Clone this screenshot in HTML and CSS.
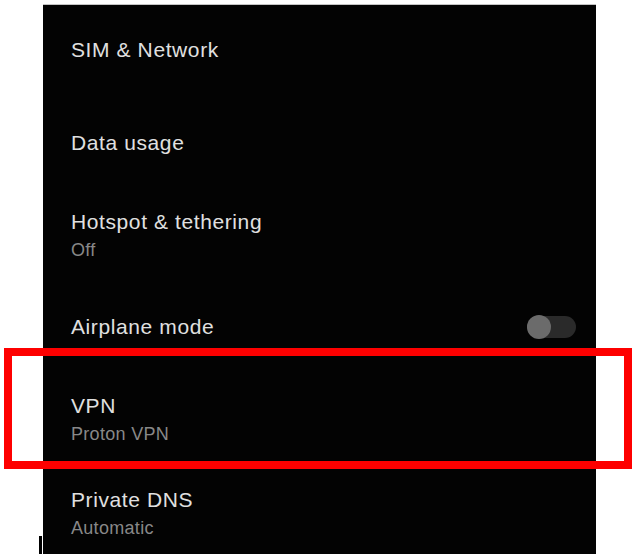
FILE: index.html
```html
<!DOCTYPE html>
<html lang="en">
<head>
<meta charset="utf-8">
<title>Network settings</title>
<link rel="stylesheet" href="styles.css">
</head>
<body>
<div class="page">
  <div class="screen">
    <div class="row"><div class="text"><div class="title">SIM &amp; Network</div></div></div>
    <div class="row"><div class="text"><div class="title">Data usage</div></div></div>
    <div class="row"><div class="text"><div class="title">Hotspot &amp; tethering</div><div class="sub">Off</div></div></div>
    <div class="row"><div class="text"><div class="title">Airplane mode</div></div><div class="toggle"><span class="knob"></span></div></div>
    <div class="row"><div class="text"><div class="title">VPN</div><div class="sub">Proton VPN</div></div></div>
    <div class="row"><div class="text"><div class="title">Private DNS</div><div class="sub">Automatic</div></div></div>
  </div>
  <div class="highlight"></div>
  <div class="mark"></div>
</div>
</body>
</html>
```
FILE: styles.css
```css
html, body {
  margin: 0;
  padding: 0;
  background: #ffffff;
  width: 636px;
  height: 554px;
  overflow: hidden;
}
.page {
  position: relative;
  width: 636px;
  height: 554px;
  padding-top: 4px;
  box-sizing: border-box;
}
.screen {
  margin-left: 43px;
  width: 553px;
  height: 550px;
  background: #030303;
  border-top: 1px solid #c4c4c4;
  box-sizing: border-box;
  overflow: hidden;
  font-family: "Liberation Sans", Arial, sans-serif;
}
.row {
  height: 92px;
  display: flex;
  align-items: center;
  justify-content: space-between;
  padding: 2px 20px 0 28px;
  box-sizing: border-box;
}
.row:first-child {
  height: 91px;
  padding-top: 0;
  padding-bottom: 2px;
}
.row:last-child {
  padding-top: 6px;
}
.text {
  display: flex;
  flex-direction: column;
}
.title {
  font-size: 21px;
  line-height: 28px;
  letter-spacing: 0.6px;
  color: #e0e0e0;
}
.sub {
  font-size: 18px;
  line-height: 24px;
  margin-top: 2px;
  letter-spacing: 0.3px;
  color: #888888;
}
.toggle {
  width: 49px;
  height: 22px;
  border-radius: 11px;
  background: #2a2a2a;
  display: flex;
  align-items: center;
}
.knob {
  width: 24px;
  height: 24px;
  border-radius: 50%;
  background: #6b6b6b;
}
.highlight {
  position: absolute;
  left: 4px;
  top: 348px;
  width: 628px;
  height: 121px;
  border: 8px solid #fe0000;
  box-sizing: border-box;
}
.mark {
  position: absolute;
  left: 39px;
  top: 536px;
  width: 3px;
  height: 18px;
  background: #000000;
}
```
